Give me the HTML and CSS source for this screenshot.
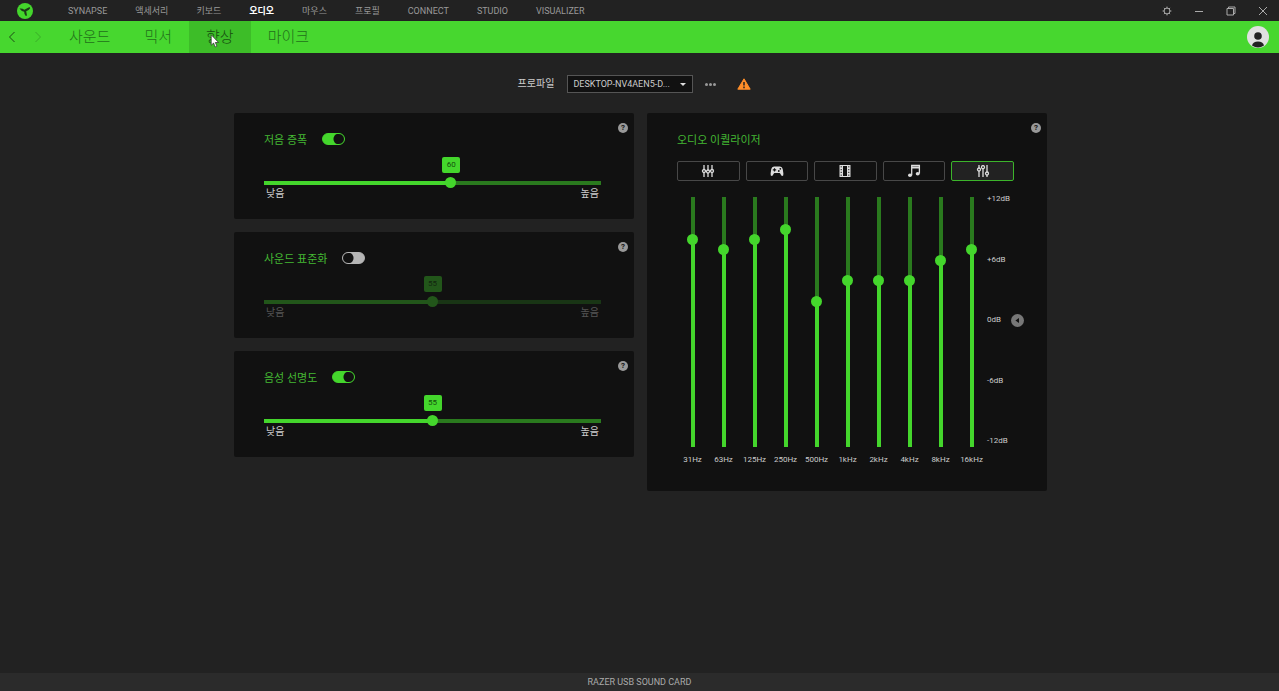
FILE: index.html
```html
<!DOCTYPE html>
<html lang="ko">
<head>
    <meta charset="UTF-8">
    <meta name="viewport" content="width=device-width, initial-scale=1.0">
    <title>Razer Synapse</title>
    <link rel="stylesheet" href="styles.css">
</head>
<body>

    <header class="topbar">
        <svg class="logo" viewBox="0 0 16 16" aria-hidden="true">
            <circle cx="8" cy="8" r="8" fill="#44d62c"/>
            <path d="M2.500 5.500Q5.500 5.200 7.300 6.700L12.500 4L13.200 5.200Q11.500 7.800 9.200 8.200L10 12.500L8.800 13Q7 11 7.200 8.700Q4.500 8.500 2.500 5.500Z" fill="#1c3a18"/>
        </svg>
        <nav class="main-nav">
            <a href="#">SYNAPSE</a>
            <a href="#">액세서리</a>
            <a href="#">키보드</a>
            <a href="#" class="active">오디오</a>
            <a href="#">마우스</a>
            <a href="#">프로필</a>
            <a href="#">CONNECT</a>
            <a href="#">STUDIO</a>
            <a href="#">VISUALIZER</a>
        </nav>
        <div class="window-buttons">
            <button type="button" aria-label="설정">
                <svg viewBox="0 0 10 10"><circle cx="5" cy="5" r="2.9"/><path d="M5 .6v1.5M5 7.9v1.5M.6 5h1.5M7.9 5h1.5M1.9 1.9l1 1M7.1 7.1l1 1M1.9 8.1l1-1M7.1 2.9l1-1"/></svg>
            </button>
            <button type="button" aria-label="최소화">
                <svg viewBox="0 0 10 10"><path d="M1 5.5h8"/></svg>
            </button>
            <button type="button" aria-label="이전 크기로">
                <svg viewBox="0 0 10 10"><path d="M1 2.5h6.5v6.5H1zM2.5 2.5V1H9v6.5H7.5"/></svg>
            </button>
            <button type="button" aria-label="닫기">
                <svg viewBox="0 0 10 10"><path d="M1 1l8 8M9 1l-8 8"/></svg>
            </button>
        </div>
    </header>

    <div class="subbar">
        <button type="button" class="arrow" aria-label="뒤로">
            <svg viewBox="0 0 8 12"><path d="M6.5 1L1.5 6l5 5"/></svg>
        </button>
        <button type="button" class="arrow" aria-label="앞으로" disabled>
            <svg viewBox="0 0 8 12"><path d="M1.5 1l5 5-5 5"/></svg>
        </button>
        <nav class="tabs">
            <a href="#">사운드</a>
            <a href="#">믹서</a>
            <a href="#" class="active">향상
                <svg class="cursor" viewBox="0 0 9 13" aria-hidden="true"><path d="M1 .8v9.6l2.2-2 1.5 3.6 1.6-.7-1.5-3.4h3z" fill="#fff" stroke="#222" stroke-width=".6"/></svg>
            </a>
            <a href="#">마이크</a>
        </nav>
        <button type="button" class="avatar" aria-label="계정">
            <svg viewBox="0 0 22 22">
                <circle cx="11" cy="11" r="11" fill="#e0e0e0"/>
                <circle cx="11" cy="10" r="3.8" fill="#222"/>
                <path d="M5 19.6 Q6 15.6 11 15.6 Q16 15.6 17 19.6 Q14 21.6 11 21.6 Q8 21.6 5 19.6Z" fill="#222"/>
            </svg>
        </button>
    </div>

    <main>
        <div class="profile">
            <label for="profile">프로파일</label>
            <div class="select">
                <select id="profile">
                    <option>DESKTOP-NV4AEN5-D...</option>
                </select>
            </div>
            <button type="button" class="more" aria-label="더 보기"><span></span><span></span><span></span></button>
            <svg class="warning" viewBox="0 0 14 12" role="img" aria-label="경고">
                <path d="M7 .8L13.2 11.2H.8z" fill="#ff8f2a" stroke="#ff8f2a" stroke-width="1" stroke-linejoin="round"/>
                <path d="M7 4v3.6M7 8.6v1.6" stroke="#222" stroke-width="1.5"/>
            </svg>
        </div>

        <div class="columns">
            <div class="effects">
                <section class="card">
                    <button type="button" class="help" aria-label="도움말">?</button>
                    <div class="card-title">
                        <h2><label for="bass-on">저음 증폭</label></h2>
                        <input type="checkbox" class="toggle" id="bass-on" checked>
                    </div>
                    <div class="level" style="--pos: 55.56%">
                        <output for="bass">60</output>
                        <input type="range" id="bass" aria-label="저음 증폭" min="10" max="100" value="60">
                        <div class="level-labels"><span>낮음</span><span>높음</span></div>
                    </div>
                </section>

                <section class="card">
                    <button type="button" class="help" aria-label="도움말">?</button>
                    <div class="card-title">
                        <h2><label for="normal-on">사운드 표준화</label></h2>
                        <input type="checkbox" class="toggle" id="normal-on">
                    </div>
                    <div class="level off" style="--pos: 50%">
                        <output for="normal">55</output>
                        <input type="range" id="normal" aria-label="사운드 표준화" min="10" max="100" value="55" disabled>
                        <div class="level-labels"><span>낮음</span><span>높음</span></div>
                    </div>
                </section>

                <section class="card">
                    <button type="button" class="help" aria-label="도움말">?</button>
                    <div class="card-title">
                        <h2><label for="voice-on">음성 선명도</label></h2>
                        <input type="checkbox" class="toggle" id="voice-on" checked>
                    </div>
                    <div class="level" style="--pos: 50%">
                        <output for="voice">55</output>
                        <input type="range" id="voice" aria-label="음성 선명도" min="10" max="100" value="55">
                        <div class="level-labels"><span>낮음</span><span>높음</span></div>
                    </div>
                </section>
            </div>

            <section class="card equalizer">
                <button type="button" class="help" aria-label="도움말">?</button>
                <div class="card-title">
                    <h2>오디오 이퀄라이저</h2>
                </div>
                <div class="presets">
                    <button type="button" aria-label="기본">
                        <svg viewBox="0 0 14 14"><g stroke="#ddd" stroke-width="1.3" fill="#111"><path d="M3 1v12M7 1v12M11 1v12"/><circle cx="3" cy="7" r="1.5"/><circle cx="7" cy="7.500" r="1.5"/><circle cx="11" cy="7" r="1.5"/></g></svg>
                    </button>
                    <button type="button" aria-label="게임">
                        <svg viewBox="0 0 14 14"><path d="M4 2.500h6q2.200 0 2.700 2.600l.7 4.400q.2 2.500-1.200 2.500-.9 0-1.700-2l-.8-1H4.300l-.8 1Q2.700 12 1.800 12 .4 12 .6 9.500l.7-4.400Q1.800 2.500 4 2.500z" fill="#ddd"/><path d="M4.500 4.200v3.400M2.800 5.900h3.400" stroke="#111" stroke-width="1.200"/><circle cx="10.300" cy="4.800" r=".9" fill="#111"/><circle cx="8.800" cy="7" r=".9" fill="#111"/></svg>
                    </button>
                    <button type="button" aria-label="영화">
                        <svg viewBox="0 0 14 14"><path d="M1.500 1h11v12h-11z" fill="#ddd"/><path d="M5 2h4v10H5z" fill="#111"/><path d="M3.200 2.200v10M10.800 2.200v10" stroke="#111" stroke-width="1" stroke-dasharray="1.200 1.600"/></svg>
                    </button>
                    <button type="button" aria-label="음악">
                        <svg viewBox="0 0 14 14"><path d="M4.700 11.200V1.500H12.400V9.500" fill="none" stroke="#ddd" stroke-width="1.300"/><path d="M4.700 3.500h7.700" stroke="#ddd" stroke-width="2"/><ellipse cx="3" cy="11.300" rx="2" ry="1.700" fill="#ddd"/><ellipse cx="10.700" cy="9.800" rx="2" ry="1.700" fill="#ddd"/></svg>
                    </button>
                    <button type="button" class="active" aria-label="사용자 지정">
                        <svg viewBox="0 0 14 14"><g stroke="#ddd" stroke-width="1.300" fill="#222"><path d="M3 1v12M7 1v12M11 1v12"/><circle cx="3" cy="5.500" r="1.500"/><circle cx="7" cy="3.200" r="1.500"/><circle cx="11" cy="9.500" r="1.500"/></g></svg>
                    </button>
                </div>
                <div class="eq">
                    <div class="bands">
                        <div class="band" style="--pos: 83.33%"><input type="range" id="b31" min="-12" max="12" value="8"><label for="b31">31Hz</label></div>
                        <div class="band" style="--pos: 79.17%"><input type="range" id="b63" min="-12" max="12" value="7"><label for="b63">63Hz</label></div>
                        <div class="band" style="--pos: 83.33%"><input type="range" id="b125" min="-12" max="12" value="8"><label for="b125">125Hz</label></div>
                        <div class="band" style="--pos: 87.5%"><input type="range" id="b250" min="-12" max="12" value="9"><label for="b250">250Hz</label></div>
                        <div class="band" style="--pos: 58.33%"><input type="range" id="b500" min="-12" max="12" value="2"><label for="b500">500Hz</label></div>
                        <div class="band" style="--pos: 66.67%"><input type="range" id="b1k" min="-12" max="12" value="4"><label for="b1k">1kHz</label></div>
                        <div class="band" style="--pos: 66.67%"><input type="range" id="b2k" min="-12" max="12" value="4"><label for="b2k">2kHz</label></div>
                        <div class="band" style="--pos: 66.67%"><input type="range" id="b4k" min="-12" max="12" value="4"><label for="b4k">4kHz</label></div>
                        <div class="band" style="--pos: 75%"><input type="range" id="b8k" min="-12" max="12" value="6"><label for="b8k">8kHz</label></div>
                        <div class="band" style="--pos: 79.17%"><input type="range" id="b16k" min="-12" max="12" value="7"><label for="b16k">16kHz</label></div>
                    </div>
                    <div class="scale">
                        <div class="scale-labels">
                            <span>+12dB</span>
                            <span>+6dB</span>
                            <span>0dB</span>
                            <span>-6dB</span>
                            <span>-12dB</span>
                        </div>
                        <button type="button" class="reset" aria-label="0dB로 초기화">
                            <svg viewBox="0 0 13 13"><circle cx="6.500" cy="6.500" r="6.500" fill="#777"/><path d="M8 4v5L4.400 6.500z" fill="#111"/></svg>
                        </button>
                    </div>
                </div>
            </section>
        </div>
    </main>

    <footer>RAZER USB SOUND CARD</footer>

</body>
</html>
```
FILE: styles.css
```css
* {
    box-sizing: border-box;
}
body {
    margin: 0;
    min-height: 100vh;
    display: flex;
    flex-direction: column;
    background-color: #222;
    color: #ccc;
    font-family: Roboto, "Noto Sans CJK KR", sans-serif;
    font-size: 10px;
}
a {
    color: inherit;
    text-decoration: none;
}
button {
    padding: 0;
    border: none;
    background: none;
    color: inherit;
    font: inherit;
    cursor: pointer;
}
svg {
    display: block;
}

/* top bar */
.topbar {
    display: flex;
    align-items: center;
    height: 21px;
    padding: 0 11px 0 17px;
    color: #999;
    font-size: 9px;
}
.logo {
    width: 16px;
    height: 16px;
}
.main-nav {
    display: flex;
    gap: 28px;
    margin-left: 35px;
    line-height: 20px;
}
.main-nav .active {
    color: #fff;
    font-weight: bold;
}
.window-buttons {
    display: flex;
    gap: 22px;
    margin-left: auto;
}
.window-buttons svg {
    width: 10px;
    height: 10px;
    fill: none;
    stroke: #aaa;
    stroke-width: 1;
}

/* green bar */
.subbar {
    display: flex;
    align-items: center;
    height: 32px;
    padding: 0 10px 0 8px;
    background-color: #47d72f;
}
.arrow {
    margin-right: 18px;
}
.arrow svg {
    width: 8px;
    height: 12px;
    fill: none;
    stroke: #1d4a16;
    stroke-width: 1;
}
.arrow:disabled {
    opacity: 0.3;
}
.tabs {
    display: flex;
    margin-right: auto;
    margin-left: -8px;
    color: #22701a;
    font-size: 15px;
    font-weight: 300;
    line-height: 32px;
}
.tabs a {
    position: relative;
    padding: 0 17px;
}
.tabs .active {
    background-color: #3dbd28;
    color: #174d10;
}
.cursor {
    position: absolute;
    top: 13px;
    left: 21px;
    width: 10px;
    height: 14px;
}
.avatar svg {
    width: 22px;
    height: 22px;
}

/* profile row */
main {
    flex: 1;
    padding: 22px 20px 20px 22px;
}
.profile {
    display: flex;
    justify-content: center;
    align-items: center;
    margin-bottom: 20px;
    padding-right: 12px;
}
.profile label {
    margin-right: 13px;
    line-height: 16px;
}
.select {
    position: relative;
}
.select select {
    display: block;
    width: 126px;
    height: 18px;
    padding: 0 5px;
    border: 1px solid #555;
    border-radius: 0;
    background-color: #111;
    color: #ccc;
    font: inherit;
    font-size: 9px;
    appearance: none;
}
.select::after {
    content: "";
    position: absolute;
    top: 8px;
    right: 7px;
    border: 3px solid transparent;
    border-top-color: #ddd;
    border-bottom: none;
}
.more {
    display: flex;
    gap: 1px;
    margin: 0 21px 0 12px;
}
.more span {
    width: 3px;
    height: 3px;
    border-radius: 50%;
    background-color: #999;
}
.warning {
    width: 14px;
    height: 12px;
}

/* cards */
.columns {
    display: grid;
    grid-template-columns: 1fr 1fr;
    align-items: start;
    gap: 13px;
    max-width: 813px;
    margin: 0 auto;
}
.effects {
    display: grid;
    gap: 13px;
}
.card {
    position: relative;
    padding: 18px 33px 19px 30px;
    border-radius: 2px;
    background-color: #111;
}
.card-title {
    display: flex;
    align-items: center;
    gap: 15px;
    height: 16px;
}
.card-title h2 {
    margin: 0;
    padding-top: 4px;
    color: #44b833;
    font-size: 11px;
    font-weight: normal;
    line-height: 16px;
}
.help {
    position: absolute;
    top: 10px;
    right: 6px;
    width: 10px;
    height: 10px;
    border-radius: 50%;
    background-color: #999;
    color: #111;
    font-size: 8px;
    font-weight: bold;
    line-height: 10px;
    text-align: center;
}
.toggle {
    width: 23px;
    height: 12px;
    margin: 0;
    border: 1px solid #44d62c;
    border-radius: 6px;
    background: radial-gradient(circle at 16px 5px, #111 5px, #44d62c 6px);
    appearance: none;
}
.toggle:not(:checked) {
    border-color: #b5b5b5;
    background: radial-gradient(circle at 5px 5px, #111 5px, #b5b5b5 6px);
}

/* sliders */
input[type="range"] {
    display: block;
    margin: 0;
    background-color: transparent;
    background-repeat: no-repeat;
    background-position: center;
    appearance: none;
}
input[type="range"]::-webkit-slider-thumb {
    width: 11px;
    height: 11px;
    border-radius: 50%;
    background-color: #44d62c;
    appearance: none;
}
.level {
    position: relative;
    margin-top: 30px;
}
.level.off {
    opacity: 0.35;
}
.level input {
    width: 100%;
    height: 11px;
    background-image: linear-gradient(to right, #44d62c var(--pos), #2a7a1e var(--pos));
    background-size: 100% 4px;
}
.level output {
    position: absolute;
    top: -20px;
    left: var(--pos);
    width: 18px;
    margin-left: -9px;
    border-radius: 2px;
    background-color: #44d62c;
    color: #14500c;
    font-size: 8px;
    line-height: 16px;
    text-align: center;
}
.level-labels {
    display: flex;
    justify-content: space-between;
    padding: 0 2px;
    line-height: 12px;
}

/* equalizer */
.equalizer {
    padding-bottom: 25px;
}
.presets {
    display: grid;
    grid-template-columns: repeat(5, 1fr);
    gap: 6px;
    margin: 14px 0 12px;
}
.presets button {
    display: flex;
    justify-content: center;
    align-items: center;
    height: 20px;
    border: 1px solid #484848;
    border-radius: 2px;
}
.presets .active {
    border-color: #3cb42b;
    background-color: #222;
}
.presets svg {
    width: 14px;
    height: 14px;
}
.eq {
    display: flex;
    align-items: flex-start;
    margin-right: -10px;
    font-size: 8px;
}
.bands {
    flex: 1;
    display: grid;
    grid-template-columns: repeat(10, 1fr);
}
.band {
    display: flex;
    flex-direction: column;
    align-items: center;
    gap: 3px;
    line-height: 12px;
}
.band input {
    width: 11px;
    height: 258px;
    background-image: linear-gradient(to top, #44d62c var(--pos), #2a7a1e var(--pos));
    background-size: 4px 250px;
    writing-mode: vertical-lr;
    direction: rtl;
}
.scale {
    flex: 0 0 37px;
    display: flex;
    align-items: center;
    justify-content: space-between;
    height: 254px;
}
.scale-labels {
    display: flex;
    flex-direction: column;
    justify-content: space-between;
    width: 23px;
    height: 100%;
    line-height: 12px;
}
.reset svg {
    width: 13px;
    height: 13px;
}

footer {
    background-color: #2b2b2b;
    color: #aaa;
    font-size: 9px;
    line-height: 18px;
    text-align: center;
}
```
